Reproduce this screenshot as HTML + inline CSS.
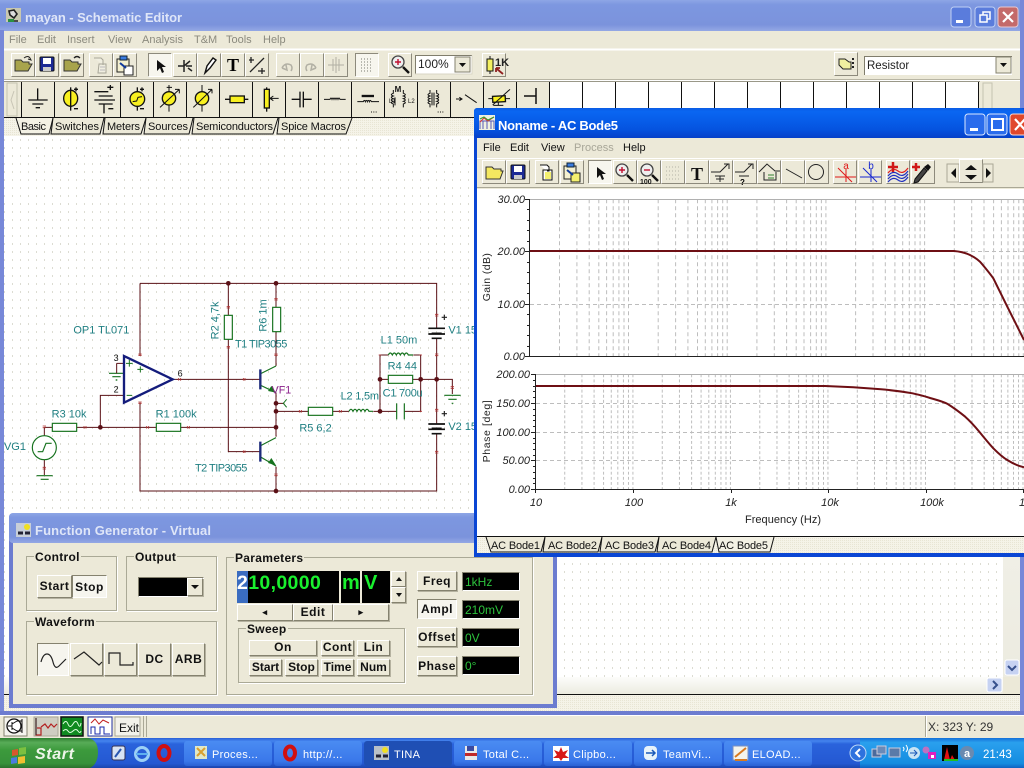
<!DOCTYPE html>
<html><head><meta charset="utf-8"><title>mayan - Schematic Editor</title>
<style>
html,body{margin:0;padding:0;width:1024px;height:768px;overflow:hidden;background:#ece9d8}
svg{position:absolute;left:0;top:0;font-family:"Liberation Sans",sans-serif}
.l{position:absolute;left:0;top:0;width:1024px;height:768px;font-family:"Liberation Sans",sans-serif}
.w{position:absolute;box-sizing:border-box}
.b{position:absolute;box-sizing:border-box;background:#ece9d8;border:1px solid;border-color:#fff #85826f #85826f #fff;box-shadow:1px 1px 0 #b5b2a0;font:bold 12px "Liberation Sans",sans-serif;letter-spacing:.5px;color:#111;text-align:center;line-height:17px}
.p{background:#f6f5ee;border-color:#85826f #fff #fff #85826f;box-shadow:none}
.g{position:absolute;box-sizing:border-box;border:1px solid #aaa996;box-shadow:1px 1px 0 #fff}
.gt{position:absolute;top:-7px;left:7px;background:#ece9d8;font:bold 12px "Liberation Sans",sans-serif;padding:0 1px;color:#111;letter-spacing:.3px;white-space:nowrap}
.d{position:absolute;box-sizing:border-box;background:#000;border:1px solid;border-color:#85826f #fff #fff #85826f;color:#2cc23c;font:12px "Liberation Sans",sans-serif;padding:1px 2px;line-height:16px}
</style></head><body>

<svg width="1024" height="768" viewBox="0 0 1024 768">
<defs>
<linearGradient id="ti" x1="0" y1="0" x2="0" y2="1"><stop offset="0" stop-color="#8ea6e6"/><stop offset=".15" stop-color="#7d97e0"/><stop offset=".8" stop-color="#7b93dc"/><stop offset="1" stop-color="#94a8e4"/></linearGradient>
<linearGradient id="ta" x1="0" y1="0" x2="0" y2="1"><stop offset="0" stop-color="#0a5ce4"/><stop offset=".12" stop-color="#0a66f2"/><stop offset=".7" stop-color="#0554e0"/><stop offset="1" stop-color="#0640c8"/></linearGradient>
<linearGradient id="tb" x1="0" y1="0" x2="0" y2="1"><stop offset="0" stop-color="#2a5fd6"/><stop offset=".1" stop-color="#4484ee"/><stop offset=".2" stop-color="#2a63dc"/><stop offset=".85" stop-color="#2458d2"/><stop offset="1" stop-color="#1c45ad"/></linearGradient>
<linearGradient id="tr" x1="0" y1="0" x2="0" y2="1"><stop offset="0" stop-color="#1470d8"/><stop offset=".15" stop-color="#2aa0ee"/><stop offset=".85" stop-color="#148ce0"/><stop offset="1" stop-color="#0f62c0"/></linearGradient>
<linearGradient id="st" x1="0" y1="0" x2="0" y2="1"><stop offset="0" stop-color="#2e8030"/><stop offset=".15" stop-color="#58ac58"/><stop offset=".4" stop-color="#3c9a3c"/><stop offset=".85" stop-color="#37913a"/><stop offset="1" stop-color="#2a702c"/></linearGradient>
<linearGradient id="btnb" x1="0" y1="0" x2="0" y2="1"><stop offset="0" stop-color="#4a8cf2"/><stop offset=".8" stop-color="#3a78ea"/><stop offset="1" stop-color="#2a62d4"/></linearGradient>
<linearGradient id="sb" x1="0" y1="0" x2="0" y2="1"><stop offset="0" stop-color="#fdfdfb"/><stop offset="1" stop-color="#ecebe0"/></linearGradient>
<pattern id="dots" x="4" y="3" width="8" height="8" patternUnits="userSpaceOnUse"><rect width="8" height="8" fill="#fff"/><path d="M0 .5H1M.5 -1V2" stroke="#dcdcd2" stroke-width="1"/></pattern>
<pattern id="dith" width="2" height="2" patternUnits="userSpaceOnUse"><rect width="2" height="2" fill="#f5f3e8"/><rect width="1" height="1" fill="#e8e5d4"/></pattern>
<g id="b"><rect width="24" height="24" fill="#ece9d8"/><path d="M.5 23.5V.5H23.5" fill="none" stroke="#fff"/><path d="M23.5 .5V23.5H.5" fill="none" stroke="#8d8a7c"/></g>
<g id="p"><rect width="24" height="24" fill="#f7f6ee"/><path d="M.5 23.5V.5H23.5" fill="none" stroke="#8d8a7c"/><path d="M23.5 .5V23.5H.5" fill="none" stroke="#fff"/></g>
<path id="arr" d="M0 0V11L3 8L5 13L7 12L5 7H9Z" fill="#111"/>
</defs>

<!-- main window -->
<rect width="1024" height="768" fill="#ece9d8"/>
<rect width="1024" height="31" fill="url(#ti)"/>
<rect x="0" y="30" width="4" height="690" fill="#7788d8"/>
<rect x="1020" y="0" width="4" height="716" fill="#7788d8"/>
<g transform="translate(6,8)"><rect width="15" height="14" fill="#c8c8b0"/><path d="M3 3l5-1 3 4-3 4-4-3zM2 13h10" stroke="#222" stroke-width="1.6" fill="#ddd"/><rect x="2" y="11" width="6" height="3" fill="#2a9040"/></g>
<text x="25" y="22" font-size="13" font-weight="bold" fill="#dfe6f8" textLength="157">mayan - Schematic Editor</text>
<g transform="translate(951,7)"><rect width="20" height="20" rx="3" fill="#5a7cdc" stroke="#c0d0f4"/><rect x="5" y="13" width="7" height="3" fill="#fff"/></g>
<g transform="translate(975,7)"><rect width="20" height="20" rx="3" fill="#5a7cdc" stroke="#c0d0f4"/><path d="M5 8h7v7H5zM8 8V5h7v7h-3" fill="none" stroke="#fff" stroke-width="1.5"/></g>
<g transform="translate(998,7)"><rect width="20" height="20" rx="3" fill="#c46a6a" stroke="#e8c8d0"/><path d="M5 5l10 10M15 5L5 15" stroke="#fff" stroke-width="2.2"/></g>

<g font-size="11" fill="#8b8a7e">
<text x="9" y="43">File</text><text x="37" y="43">Edit</text><text x="67" y="43">Insert</text><text x="108" y="43">View</text><text x="142" y="43">Analysis</text><text x="194" y="43">T&amp;M</text><text x="226" y="43">Tools</text><text x="263" y="43">Help</text>
</g>
<path d="M4 49.5H1020" stroke="#fff" stroke-width="2"/>
<path d="M4 79.5H1020" stroke="#b8b5a4"/><path d="M4 80.5H1020" stroke="#fff"/>

<!-- main toolbar -->
<use href="#b" x="11" y="53"/><use href="#b" x="35" y="53"/><use href="#b" x="60" y="53"/>
<use href="#b" x="89" y="53"/><use href="#b" x="113" y="53"/>
<use href="#p" x="148" y="53"/><use href="#b" x="173" y="53"/><use href="#b" x="197" y="53"/><use href="#b" x="221" y="53"/><use href="#b" x="245" y="53"/>
<use href="#b" x="276" y="53"/><use href="#b" x="300" y="53"/><use href="#b" x="324" y="53"/>
<use href="#p" x="355" y="53"/><use href="#b" x="388" y="53"/><use href="#b" x="482" y="53"/>
<use href="#b" x="834" y="52"/>
<path d="M15 71V60h6l2 2h6v2h3l-4 7Z" fill="#a8a44c" stroke="#333"/><path d="M24 58q4-3 6 0l1 2-3-1" fill="none" stroke="#222"/>
<path d="M64 71V60h6l2 2h6v2h3l-4 7Z" fill="#a8a44c" stroke="#333"/><path d="M74 58q3-3 6 0" fill="none" stroke="#222" stroke-width="1.3"/>
<rect x="40" y="57" width="14" height="14" rx="1" fill="#1c2a96" stroke="#111"/><rect x="43" y="58" width="8" height="6" fill="#fff"/><rect x="43" y="67" width="8" height="4" fill="#ccc"/>
<path d="M94 58h7l2 2v5M99 64h7v9h-8z" fill="#f0eee0" stroke="#a8a698"/><path d="M100 67h5M100 70h5" stroke="#bbb"/>
<path d="M117 59h12v13h-12z" fill="#f4f0d0" stroke="#222"/><rect x="120" y="56" width="7" height="4" fill="#3a7ce0" stroke="#123"/><path d="M124 66h9v9h-9z" fill="#fff" stroke="#222"/><path d="M120 63l6 5" stroke="#113a9c" stroke-width="2"/>
<use href="#arr" x="157" y="60"/>
<path d="M178 66h6M184 60v12M184 66l6-5M186 66h6M188 68l4 3" stroke="#222" stroke-width="1.5" fill="none"/>
<path d="M205 73l2-7 6-8 3 2-6 8Z" fill="#fff" stroke="#111" stroke-width="1.4"/>
<text x="233" y="71" text-anchor="middle" font-family="Liberation Serif" font-weight="bold" font-size="18">T</text>
<path d="M250 72l14-14M249 60h5M251 57v6M258 71h7M262 68v6" stroke="#222" stroke-width="1.3" fill="none"/>
<path d="M282 68q3-6 9-3 2 3 0 6M282 68l5 2-1-5" fill="none" stroke="#b2b0a4" stroke-width="1.5"/>
<path d="M316 68q-3-6-9-3-2 3 0 6M316 68l-5 2 1-5" fill="none" stroke="#b2b0a4" stroke-width="1.5"/>
<path d="M328 65h16M336 57v16" stroke="#b2b0a4"/><path d="M333 59v12M339 59v12" stroke="#b2b0a4"/>
<path d="M361 59h12M361 62h12M361 65h12M361 68h12M361 71h12" stroke="#7a7a70" stroke-dasharray="1 2"/>
<circle cx="398" cy="62" r="6" fill="#eee" stroke="#444" stroke-width="1.3"/><path d="M395 62h6M398 59v6" stroke="#c01030" stroke-width="1.4"/><path d="M403 67l6 6" stroke="#111" stroke-width="2.4"/>
<rect x="415" y="55" width="57" height="19" fill="#fff"/><path d="M415.5 74V55.5H472" fill="none" stroke="#807d6c"/><path d="M472 55.500V74H415" fill="none" stroke="#d8d5c4"/>
<text x="418" y="68" font-size="12" fill="#222">100%</text>
<rect x="455" y="57" width="15" height="15" fill="#ece9d8" stroke="#85826f"/><path d="M459 63h7l-3.500 4Z" fill="#111"/>
<path d="M490 56v18" stroke="#111"/><rect x="487" y="59" width="6" height="12" fill="#f4f060" stroke="#111"/><text x="495" y="66" font-size="11" font-weight="bold" fill="#222">1K</text><path d="M497 69l6 5M496 68h4M496 68v4" stroke="#902020" stroke-width="1.8" fill="none"/>
<path d="M839 59h6l4 3h2v7h-8l-4-4Z" fill="#f0f0a0" stroke="#222"/><path d="M853 58v12" stroke="#222" stroke-dasharray="2 2" stroke-width="2"/>
<rect x="864" y="56" width="148" height="19" fill="#fff"/><path d="M864.500 75V56.500H1012" fill="none" stroke="#807d6c"/>
<text x="867" y="69" font-size="11.500" fill="#222">Resistor</text>
<rect x="996" y="57" width="15" height="16" fill="#ece9d8" stroke="#85826f"/><path d="M1000 63h7l-3.500 4Z" fill="#111"/>

<!-- palette -->
<path d="M4 81.500H980" stroke="#9a9888"/>
<rect x="7" y="83" width="10" height="33" fill="#ece9d8" stroke="#c5c2b0"/><path d="M14 91l-3 9 3 9" fill="none" stroke="#c8c5b5"/>
<rect x="549" y="82" width="430" height="35" fill="#fff"/>
<g stroke="#111"><path d="M21.500 82V117M54.500 82V117M87.500 82V117M120.500 82V117M153.500 82V117M186.500 82V117M219.500 82V117M252.500 82V117M285.500 82V117M318.500 82V117M351.500 82V117M384.500 82V117M417.500 82V117M450.500 82V117M483.500 82V117M516.500 82V117M549.500 82V117M582.500 82V117M615.500 82V117M648.500 82V117M681.500 82V117M714.500 82V117M747.500 82V117M780.500 82V117M813.500 82V117M846.500 82V117M879.500 82V117M912.500 82V117M945.500 82V117M978.500 82V117"/></g>
<rect x="983" y="83" width="9" height="33" fill="#ece9d8" stroke="#c5c2b0"/>
<g transform="scale(.33333)" fill="none" stroke="#111" stroke-width="4">
 <path d="M113 265V300M85 300H143M97 312H130M107 323H120"/>
 <path d="M212 262V332"/><ellipse cx="212" cy="295" rx="21" ry="24" fill="#f8f020"/><path d="M212 268V322"/><path d="M222 268H234M228 262V274M222 326H234"/>
 <path d="M283 275H325M296 288H338M283 300H345M296 312H338M312 312V340M322 262H340M331 255V270M325 326H340"/>
 <path d="M412 262V332"/><circle cx="412" cy="297" r="22" fill="#f8f020"/><path d="M398 305L410 303L414 292L426 290" stroke-width="3"/><path d="M420 268H432M426 262V274M420 326H432"/>
 <circle cx="507" cy="295" r="20" fill="#f8f020"/><path d="M507 255V275M507 315V335M480 322L538 268M538 268H525M538 268V280M500 262H516" stroke-width="3"/>
 <circle cx="606" cy="295" r="20" fill="#f8f020"/><path d="M606 255V275M606 315V335M580 322L636 268M636 268H624M636 268V280" stroke-width="3"/>
 <path d="M675 298H745"/><rect x="690" y="288" width="43" height="20" fill="#f8f020"/>
 <path d="M800 262V335"/><rect x="793" y="268" width="15" height="56" fill="#f8f020"/><path d="M836 295H812M820 288L810 295L820 302" stroke-width="3"/>
 <path d="M875 298H900M910 298H935M900 275V322M910 275V322"/>
 <path d="M972 298H990q3-8 6 0q3-8 6 0q3-8 6 0q3-8 6 0q3-8 6 0H1037" stroke-width="3"/>
 <path d="M1072 305H1090q3-8 6 0q3-8 6 0q3-8 6 0q3-8 6 0H1137" stroke-width="3"/><path d="M1085 288H1122" stroke-width="7"/><path d="M1113 336h3M1120 336h3M1127 336h3" stroke-width="3"/>
 <path d="M1180 270V280q-12 4 0 8q-12 4 0 8q-12 4 0 8q-12 4 0 8V322M1210 270V280q12 4 0 8q12 4 0 8q12 4 0 8q12 4 0 8V322M1185 292V316" stroke-width="3"/>
 <path d="M1290 270V280q-12 4 0 8q-12 4 0 8q-12 4 0 8q-12 4 0 8V322M1310 270V280q12 4 0 8q12 4 0 8q12 4 0 8q12 4 0 8V322M1296 278V316M1302 278V316M1313 336h3M1320 336h3M1327 336h3" stroke-width="3"/>
 <path d="M1368 297H1385M1378 292L1386 297L1378 302M1395 284L1430 308" stroke-width="3"/>
 <path d="M1465 296H1530M1495 296V316M1480 316H1510" stroke-width="3"/><rect x="1478" y="288" width="38" height="18" fill="#f8f020" transform="rotate(-3 1497 297)"/><path d="M1478 315L1530 268" stroke-width="3"/>
</g>
<text x="398" y="92" font-size="8" font-weight="bold" text-anchor="middle" fill="#111">M</text>
<text x="389" y="103" font-size="6" fill="#111">L1</text><text x="408" y="103" font-size="6" fill="#111">L2</text>
<path d="M524 96h12M536 88v16" stroke="#111" stroke-width="1.500"/>

<!-- tab strip -->
<rect x="4" y="117" width="1016" height="19" fill="url(#dith)"/>
<path d="M4 117.500H1020" stroke="#111"/>
<g fill="#ece9d8" stroke="#111">
<path d="M16 118L21 134H49L53 118" fill="#f3f1e4"/>
<path d="M53 118L51 134H100L104 118"/>
<path d="M105 118L103 134H141L146 118"/>
<path d="M146 118L144 134H189L193 118"/>
<path d="M194 118L192 134H273L278 118"/>
<path d="M279 118L277 134H346L352 118"/>
</g>
<g font-size="11" fill="#111">
<text x="21" y="130" textLength="25">Basic</text><text x="55" y="130" textLength="44">Switches</text><text x="107" y="130" textLength="33">Meters</text><text x="148" y="130" textLength="40">Sources</text><text x="196" y="130" textLength="77">Semiconductors</text><text x="281" y="130" textLength="65">Spice Macros</text>
</g>

<!-- canvas -->
<rect x="4" y="136" width="999" height="541" fill="url(#dots)"/>
<rect x="1003" y="136" width="17" height="541" fill="url(#sb)"/>
<rect x="4" y="677" width="999" height="17" fill="url(#sb)"/>
<rect x="1003" y="677" width="17" height="17" fill="#ece9d8"/>
<path d="M4 694.500H1020" stroke="#111"/>
<rect x="4" y="695" width="1016" height="16" fill="url(#dith)"/>
<rect x="0" y="711" width="1024" height="4" fill="#6c7cd0"/>
<g transform="translate(1005,660)"><rect width="14" height="15" rx="2" fill="#c6d2f2" stroke="#fff"/><path d="M3 6l4 4 4-4" fill="none" stroke="#36508c" stroke-width="2"/></g>
<g transform="translate(987,678)"><rect width="15" height="14" rx="2" fill="#c6d2f2" stroke="#fff"/><path d="M6 3l4 4-4 4" fill="none" stroke="#36508c" stroke-width="2"/></g>

<!-- schematic -->
<g transform="translate(0,270) scale(.33333)">
 <g fill="none" stroke="#5a1016" stroke-width="3">
  <path d="M420 40H1310V175M420 40V258M420 398V663H1310V490M1310 205V460"/>
  <path d="M685 40V136M685 208V545H780M828 40V112M828 185V288M828 368V500M828 590V663"/>
  <path d="M520 328H780M301 472V376H372M133 472H157M230 472H469M542 472H828"/>
  <path d="M828 424H925M998 424H1047M1120 424H1190M1213 424H1262V255H1240M1140 424V255H1165M1140 328H1165M1238 328H1357V372"/>
  <path d="M133 472V497M133 569V615M828 400H852"/>
 </g>
 <g fill="#5a1016"><circle cx="685" cy="40" r="7"/><circle cx="828" cy="40" r="7"/><circle cx="828" cy="663" r="7"/><circle cx="828" cy="472" r="7"/><circle cx="828" cy="424" r="7"/><circle cx="828" cy="400" r="7"/><circle cx="301" cy="472" r="7"/><circle cx="1140" cy="424" r="7"/><circle cx="1140" cy="328" r="7"/><circle cx="1262" cy="328" r="7"/><circle cx="1310" cy="328" r="7"/></g>
 <g fill="#fff" stroke="#16721e" stroke-width="3.500">
  <rect x="673" y="136" width="24" height="72"/><rect x="818" y="112" width="24" height="73"/>
  <rect x="1165" y="316" width="73" height="24"/><rect x="925" y="412" width="73" height="24"/>
  <rect x="157" y="460" width="73" height="24"/><rect x="469" y="460" width="73" height="24"/>
 </g>
 <g fill="none" stroke="#16721e" stroke-width="3.500">
  <circle cx="133" cy="533" r="36" fill="#fff"/><path d="M113 545H128L138 520H155"/>
  <path d="M110 617H158M122 628H146"/>
  <path d="M1165 255q6-12 12 0q6-12 12 0q6-12 12 0q6-12 12 0q6-12 12 0h14M1047 424q6-12 12 0q6-12 12 0q6-12 12 0q6-12 12 0q6-12 12 0h12"/>
  <path d="M1190 400V448M1213 400V448"/>
  <path d="M780 312L828 288M780 345L828 368M780 528L828 503M780 560L828 588"/>
  <path d="M327 310H370M337 320H362M347 330H352"/><path d="M350 280V310M350 280H372" stroke="#5a1016" stroke-width="3"/>
  <path d="M1333 376H1382M1345 388H1370M1355 400H1360"/>
  <path d="M860 388L850 400L860 412" stroke-width="3"/>
 </g>
 <path d="M828 368L804 363L814 348Z" fill="#16721e"/><path d="M828 586L804 579L814 564Z" fill="#16721e"/>
 <path d="M781 298V358M781 515V575" stroke="#1c2a7a" stroke-width="7"/>
 <path d="M1285 175H1335M1295 190H1325M1285 192H1335M1295 205H1325" stroke="#111" stroke-width="5" fill="none"/>
 <path d="M1285 462H1335M1295 475H1325M1285 478H1335M1295 491H1325" stroke="#111" stroke-width="5" fill="none"/>
 <path d="M1325 142H1341M1333 134V150M1325 431H1341M1333 423V439" stroke="#222" stroke-width="3.500"/>
 <path d="M372 258L518 328L372 398Z" fill="none" stroke="#141c7c" stroke-width="7"/>
 <path d="M378 280H398M388 270V290M412 298H430M421 289V307M380 376H396" stroke="#16721e" stroke-width="3"/>
 <path d="M680 110h10M680 114h10M680 230h10M680 234h10M823 86h10M823 90h10M823 252h10M823 256h10M730 324v8M735 324v8M730 541v8M735 541v8M536 324v8M542 324v8M898 420v8M904 420v8M1018 420v8M1024 420v8M252 468v8M258 468v8M446 468v8M440 468v8M562 468v8M568 468v8M1305 133h10M1305 138h10M1305 252h10M1305 257h10M1305 418h10M1305 423h10M1305 544h10M1305 549h10M823 612h10M823 617h10M128 592h10M128 597h10M128 468h10M128 473h10M415 252h10M415 256h10M415 400h10M415 396h10M1352 350h10M1352 355h10M1136 255h8M1258 255h8M1258 424h8" stroke="#b03030" stroke-width="2.500"/>
 <g fill="#1f7f82" font-size="33">
  <text x="220" y="190">OP1 TL071</text>
  <text x="705" y="232" textLength="157">T1 TIP3055</text>
  <text x="1142" y="220">L1 50m</text><text x="1163" y="298">R4 44</text><text x="1148" y="380" textLength="120">C1 700u</text><text x="1022" y="388" textLength="115">L2 1,5m</text><text x="898" y="484">R5 6,2</text>
  <text x="155" y="442">R3 10k</text><text x="467" y="442">R1 100k</text><text x="12" y="540">VG1</text><text x="585" y="605" textLength="157">T2 TIP3055</text>
  <text x="1345" y="190">V1 15</text><text x="1345" y="480">V2 15</text>
  <text transform="translate(655,208) rotate(-90)">R2 4,7k</text><text transform="translate(800,185) rotate(-90)">R6 1m</text>
 </g>
 <text x="815" y="370" font-size="32" fill="#8a1f8a">VF1</text>
 <g fill="#111" font-size="27"><text x="341" y="273">3</text><text x="341" y="368">2</text><text x="533" y="320">6</text></g>
</g>

<!-- status row -->
<rect x="0" y="715" width="1024" height="23" fill="#ece9d8"/>
<path d="M0 715.500H1024" stroke="#fff"/>
<path d="M143.500 716V737M146.500 716V737" stroke="#aaa896"/>
<path d="M925.500 716V737" stroke="#aaa896"/><path d="M926.500 716V737" stroke="#fff"/>
<text x="928" y="731" font-size="12" fill="#333">X: 323  Y: 29</text>
<g transform="translate(0,712)">
 <rect x="4" y="5" width="23" height="19" fill="#f5f4ee" stroke="#85826f"/>
 <circle cx="14" cy="14" r="7" fill="#fff" stroke="#111" stroke-width="1.300"/><path d="M8 14h4M12 10v8M12 12l5-3M12 16l5 3M22 7v14M17 9h5M17 19h5" stroke="#111" fill="none"/>
 <rect x="34" y="5" width="24" height="19" fill="#cfcdc2" stroke="#a8a696"/><path d="M36 6v17h5v-7h-4M41 15l4-3 3 4 3-4 3 3 3-3" fill="none" stroke="#b42020" stroke-width="1.200"/><path d="M36 6v17" stroke="#222"/>
 <rect x="61" y="5" width="22" height="19" fill="#108a20" stroke="#111" stroke-width="1.500"/><path d="M63 12q3-5 5 0t5 0 5 0 3-1M63 19q3-3 5 0t5 0 5 0 3 0" stroke="#dfffdf" fill="none"/>
 <rect x="88" y="5" width="24" height="19" fill="#fff" stroke="#2030a0"/><path d="M91 11l4-4 4 5 4-4 6 3" stroke="#c02020" fill="none"/><path d="M91 22v-7h4v7h5v-7h4v7h6" stroke="#1828a8" fill="none"/>
 <rect x="115" y="5" width="25" height="19" fill="#f3f2ea" stroke="#a8a696"/>
 <text x="119" y="20" font-size="12" fill="#111">Exit</text>
</g>

<!-- taskbar -->
<rect y="738" width="1024" height="30" fill="url(#tb)"/>
<path d="M0 738H88Q98 740 98 752Q98 764 90 768H0Z" fill="url(#st)"/>
<g><path d="M12 750l6-1v6l-6 1z" fill="#d8582c"/><path d="M19 748l7-1v7l-7 1z" fill="#7cc040"/><path d="M11 758l6-1v6l-6 1z" fill="#4a7ce0"/><path d="M18 757l7-1v7l-7 1z" fill="#f0c030"/></g>
<text x="35" y="759" font-size="16" font-weight="bold" font-style="italic" fill="#eef6ea" textLength="39">Start</text>
<g><rect x="112" y="746" width="13" height="14" rx="2" fill="#d8e4f4" stroke="#335"/><path d="M115 757l6-8" stroke="#2a58b0" stroke-width="2"/><circle cx="142" cy="754" r="6.500" fill="none" stroke="#9bd0f6" stroke-width="3"/><path d="M136 754h12" stroke="#5eb0f0" stroke-width="2"/><ellipse cx="164" cy="753" rx="5.500" ry="7" fill="none" stroke="#d01010" stroke-width="4"/></g>
<g fill="url(#btnb)">
<rect x="184" y="741" width="88" height="25" rx="3"/><rect x="274" y="741" width="88" height="25" rx="3"/><rect x="454" y="741" width="88" height="25" rx="3"/><rect x="544" y="741" width="88" height="25" rx="3"/><rect x="634" y="741" width="88" height="25" rx="3"/><rect x="724" y="741" width="88" height="25" rx="3"/>
</g>
<rect x="364" y="741" width="88" height="25" rx="3" fill="#1f4fb4"/>
<g font-size="11" fill="#fff" letter-spacing=".3">
<text x="212" y="758">Proces...</text><text x="303" y="758">http://...</text><text x="394" y="758">TINA</text><text x="483" y="758">Total C...</text><text x="573" y="758">Clipbo...</text><text x="663" y="758">TeamVi...</text><text x="752" y="758">ELOAD...</text>
</g>
<g><rect x="195" y="746" width="12" height="13" fill="#dfe8c8"/><path d="M197 748l8 8M205 748l-8 8" stroke="#d8a030" stroke-width="2"/></g>
<ellipse cx="290" cy="753" rx="5" ry="6.500" fill="none" stroke="#d01010" stroke-width="4"/>
<g><rect x="374" y="746" width="15" height="14" fill="#b8c0c8"/><circle cx="385" cy="750" r="3" fill="#f0e020"/><path d="M376 756h5M383 756h5" stroke="#223" stroke-width="3"/></g>
<g><rect x="465" y="746" width="12" height="14" fill="#e8e8e8"/><rect x="465" y="753" width="12" height="3" fill="#c02828"/><rect x="467" y="746" width="7" height="5" fill="#3a4aa0"/></g>
<g><rect x="553" y="746" width="16" height="15" fill="#fff"/><path d="M561 747l2 5 5-2-3 5 4 3-6 0-2 3-2-3-6 0 4-3-3-5 5 2Z" fill="#d81818"/></g>
<g><rect x="644" y="746" width="13" height="14" rx="4" fill="#e6f2fa"/><path d="M646 753h9M652 750l3 3-3 3" stroke="#1858b8" stroke-width="1.500" fill="none"/></g>
<g><rect x="733" y="746" width="15" height="14" fill="#f4f4ec" stroke="#7a90c0"/><path d="M735 757l11-9M735 760h12" stroke="#d87a20" stroke-width="2"/></g>
<path d="M860 738H1024V768H860Z" fill="url(#tr)"/>
<circle cx="858" cy="753" r="8" fill="#2e72de" stroke="#bcd8f8"/><path d="M860 749l-4 4 4 4" fill="none" stroke="#fff" stroke-width="2"/>
<g><rect x="872" y="749" width="9" height="8" fill="#4a6a9c" stroke="#ccd"/><rect x="877" y="746" width="9" height="8" fill="#6a8ab8" stroke="#ccd"/><rect x="889" y="748" width="11" height="9" fill="#5a7aa8" stroke="#ccd"/><path d="M903 747q2 2 0 4M906 745q3 4 0 7" stroke="#fff" fill="none"/><circle cx="914" cy="753" r="6" fill="#c8e4f4"/><path d="M910 753h7M914 750l3 3-3 3" stroke="#1858b8" fill="none"/><circle cx="926" cy="750" r="3.500" fill="#c070c0"/><rect x="928" y="752" width="8" height="7" fill="#e020c0"/><rect x="931" y="755" width="3" height="3" fill="#fff"/><rect x="942" y="745" width="16" height="16" fill="#000"/><path d="M944 760l3-13 3 13 2-5 3 5" fill="#e01010"/><path d="M944 760h14" stroke="#20c020" stroke-width="2"/><circle cx="967" cy="753" r="7" fill="#6a8ab0"/><text x="964" y="757" font-size="11" font-weight="bold" fill="#fff">a</text></g>
<text x="983" y="758" font-size="11.500" fill="#fff">21:43</text>
</svg>

<!-- function generator window -->
<div class="l">
<svg width="1024" height="768" viewBox="0 0 1024 768" style="pointer-events:none">
<path d="M9 708V518Q9 513 14 513H552Q557 513 557 518V708Z" fill="#6c7cd0"/>
<rect x="9" y="513" width="548" height="30" rx="4" fill="url(#ti)"/>
<rect x="13" y="543" width="540" height="161" fill="#ece9d8"/>
<rect x="16" y="523" width="15" height="14" fill="#c8cfd8"/><circle cx="27" cy="527" r="3" fill="#f0e020"/><path d="M18 533h5M25 533h5" stroke="#223" stroke-width="3"/>
<text x="35" y="535" font-size="13" font-weight="bold" fill="#dfe6f8" textLength="176">Function Generator - Virtual</text>
</svg>
<div class="g" style="left:26px;top:556px;width:91px;height:55px"><span class="gt">Control</span></div>
<div class="g" style="left:126px;top:556px;width:91px;height:55px"><span class="gt">Output</span></div>
<div class="g" style="left:26px;top:621px;width:191px;height:74px"><span class="gt">Waveform</span></div>
<div class="g" style="left:226px;top:557px;width:307px;height:138px"><span class="gt">Parameters</span></div>
<div class="g" style="left:238px;top:628px;width:167px;height:55px"><span class="gt">Sweep</span></div>
<div class="b" style="left:37px;top:575px;width:35px;height:23px;line-height:21px">Start</div>
<div class="b p" style="left:72px;top:575px;width:35px;height:23px;line-height:23px">Stop</div>
<div class="d" style="left:138px;top:577px;width:66px;height:20px"></div>
<div class="b" style="left:187px;top:578px;width:16px;height:18px"></div>
<div class="b" style="left:138px;top:643px;width:33px;height:33px;line-height:30px">DC</div>
<div class="b" style="left:172px;top:643px;width:33px;height:33px;line-height:30px">ARB</div>
<div class="b p" style="left:37px;top:643px;width:32px;height:33px"></div>
<div class="b" style="left:70px;top:643px;width:33px;height:33px"></div>
<div class="b" style="left:104px;top:643px;width:33px;height:33px"></div>
<div class="d" style="left:237px;top:571px;width:102px;height:32px;border:0"></div>
<div class="d" style="left:341px;top:571px;width:19px;height:32px;border:0"></div>
<div class="d" style="left:362px;top:571px;width:28px;height:32px;border:0"></div>
<div class="w" style="left:237px;top:571px;width:11px;height:32px;background:#3a6cc0"></div>
<div class="w" style="left:237px;top:572px;width:102px;height:30px;font:bold 19.5px/23px 'Liberation Sans',sans-serif;color:#19f02e;letter-spacing:.35px;padding-top:0"><span style="color:#fff">2</span>10,0000</div>
<div class="w" style="left:342px;top:572px;font:bold 20px/23px 'Liberation Sans',sans-serif;color:#19f02e">m</div>
<div class="w" style="left:364px;top:572px;font:bold 20px/23px 'Liberation Sans',sans-serif;color:#19f02e">V</div>
<div class="b" style="left:391px;top:571px;width:15px;height:16px"></div>
<div class="b" style="left:391px;top:587px;width:15px;height:16px"></div>
<div class="b" style="left:237px;top:604px;width:56px;height:17px;line-height:14px;font-size:9px">◂</div>
<div class="b" style="left:293px;top:604px;width:40px;height:17px;line-height:15px">Edit</div>
<div class="b" style="left:333px;top:604px;width:56px;height:17px;line-height:14px;font-size:9px">▸</div>
<div class="b" style="left:249px;top:640px;width:68px;height:16px;line-height:13px">On</div>
<div class="b" style="left:321px;top:640px;width:33px;height:16px;line-height:13px">Cont</div>
<div class="b" style="left:357px;top:640px;width:33px;height:16px;line-height:13px">Lin</div>
<div class="b" style="left:249px;top:659px;width:33px;height:17px;line-height:15px;letter-spacing:0">Start</div>
<div class="b" style="left:285px;top:659px;width:33px;height:17px;line-height:15px;letter-spacing:0">Stop</div>
<div class="b" style="left:321px;top:659px;width:33px;height:17px;line-height:15px;letter-spacing:0">Time</div>
<div class="b" style="left:357px;top:659px;width:33px;height:17px;line-height:15px;letter-spacing:0">Num</div>
<div class="b" style="left:417px;top:571px;width:40px;height:20px;line-height:18px">Freq</div>
<div class="b p" style="left:417px;top:599px;width:40px;height:20px;line-height:18px">Ampl</div>
<div class="b" style="left:417px;top:627px;width:40px;height:20px;line-height:18px">Offset</div>
<div class="b" style="left:417px;top:656px;width:40px;height:20px;line-height:18px">Phase</div>
<div class="d" style="left:462px;top:572px;width:58px;height:19px">1kHz</div>
<div class="d" style="left:462px;top:600px;width:58px;height:19px">210mV</div>
<div class="d" style="left:462px;top:628px;width:58px;height:19px">0V</div>
<div class="d" style="left:462px;top:656px;width:58px;height:19px">0°</div>
<svg width="1024" height="768" viewBox="0 0 1024 768" style="pointer-events:none">
<path d="M191 585h8l-4 4Z M396 581h6l-3-4Z M396 593h6l-3 4Z" fill="#111"/>
<path d="M41 662q2-8 6-8t6 8 6 4 7-7" fill="none" stroke="#222" stroke-width="1.200"/>
<path d="M74 659l10-7 15 13 3-3" fill="none" stroke="#222" stroke-width="1.200"/>
<path d="M109 664v-11h11v12h13v-3" fill="none" stroke="#222" stroke-width="1.200"/>
</svg>
</div>

<!-- Bode window -->
<svg width="1024" height="768" viewBox="0 0 1024 768">
<defs>
<path id="dec" d="M29.700 0V157M47.100 0V157M59.400 0V157M69 0V157M76.800 0V157M83.400 0V157M89.100 0V157M94.200 0V157M98.700 0V157" fill="none" stroke="#bdbdbd" stroke-dasharray="4 3"/>
</defs>
<path d="M474 557V112Q474 108 478 108H1024V557Z" fill="#0a46d4"/>
<rect x="474" y="108" width="550" height="30" rx="3" fill="url(#ta)"/>
<rect x="477" y="138" width="547" height="415" fill="#ece9d8"/>
<g transform="translate(479,115)"><rect width="16" height="15" fill="#f0f0e0"/><path d="M1 14V6h14v8M4 6v8M8 6v8M12 6v8" stroke="#5858b8" fill="none"/><path d="M1 7l4-4 4 3 6-4" stroke="#e03030" fill="none"/><path d="M1 4l4-2 4 3 6-3" stroke="#30a030" fill="none"/></g>
<text x="498" y="130" font-size="13" font-weight="bold" fill="#fff" textLength="120">Noname - AC Bode5</text>
<g transform="translate(965,114)"><rect width="20" height="21" rx="3" fill="#2a6cec" stroke="#dbe8ff"/><rect x="5" y="14" width="8" height="3" fill="#fff"/></g>
<g transform="translate(987,114)"><rect width="20" height="21" rx="3" fill="#2a6cec" stroke="#dbe8ff"/><rect x="5" y="5" width="11" height="11" fill="none" stroke="#fff" stroke-width="2"/></g>
<g transform="translate(1010,114)"><rect width="20" height="21" rx="3" fill="#e0482c" stroke="#f8d8d0"/><path d="M5 5l10 11M15 5L5 16" stroke="#fff" stroke-width="2.200"/></g>
<g font-size="11" fill="#111">
<text x="483" y="151">File</text><text x="510" y="151">Edit</text><text x="541" y="151">View</text><text x="574" y="151" fill="#a8a698">Process</text><text x="623" y="151">Help</text>
</g>
<path d="M477 158.500H1024" stroke="#fff"/>
<rect x="477" y="187" width="547" height="1" fill="#aaa896"/>
<use href="#b" x="482" y="160"/><use href="#b" x="506" y="160"/><use href="#b" x="535" y="160"/><use href="#b" x="560" y="160"/>
<use href="#p" x="588" y="160"/><use href="#b" x="613" y="160"/><use href="#b" x="637" y="160"/><use href="#b" x="661" y="160"/><use href="#b" x="685" y="160"/><use href="#b" x="709" y="160"/><use href="#b" x="733" y="160"/><use href="#b" x="757" y="160"/><use href="#b" x="781" y="160"/><use href="#b" x="805" y="160"/><use href="#b" x="833" y="160"/><use href="#b" x="858" y="160"/><use href="#b" x="886" y="160"/><use href="#b" x="911" y="160"/>
<rect x="947" y="164" width="12" height="18" fill="#ece9d8" stroke="#aaa896"/><use href="#b" x="959" y="159"/><rect x="983" y="164" width="10" height="18" fill="#ece9d8" stroke="#aaa896"/>
<path d="M956 168v10l-5-5ZM986 168v10l5-5ZM965 170l6-5 6 5ZM965 175l6 5 6-5Z" fill="#111"/>
<path d="M486 179V167h6l2 2h7v2h2l-3 8Z" fill="#f4e860" stroke="#333"/>
<rect x="511" y="165" width="14" height="14" rx="1" fill="#1c2a96" stroke="#111"/><rect x="514" y="166" width="8" height="6" fill="#fff"/><rect x="514" y="175" width="8" height="4" fill="#ccc"/>
<path d="M540 165h7l2 2v4h-2M544 170h8v10h-9V170z" fill="#fff" stroke="#111"/><rect x="545" y="172" width="6" height="7" fill="#f4f070"/>
<path d="M564 166h12v13h-12z" fill="#f4f0d0" stroke="#222"/><rect x="567" y="163" width="7" height="4" fill="#3a7ce0" stroke="#123"/><path d="M571 173h9v9h-9z" fill="#f4f070" stroke="#222"/><path d="M567 170l6 5" stroke="#113a9c" stroke-width="2"/>
<use href="#arr" x="597" y="167"/>
<circle cx="622" cy="170" r="6" fill="#eee" stroke="#444" stroke-width="1.300"/><path d="M619 170h6M622 167v6" stroke="#c01030" stroke-width="1.400"/><path d="M627 175l6 6" stroke="#111" stroke-width="2.400"/>
<circle cx="647" cy="170" r="6" fill="#eee" stroke="#444" stroke-width="1.300"/><path d="M644 170h6" stroke="#c01030" stroke-width="1.400"/><path d="M652 175l6 6" stroke="#111" stroke-width="2.400"/>
<text x="640" y="184" font-size="7" font-weight="bold" fill="#111">100</text>
<path d="M666 167h13M666 171h13M666 175h13M666 179h13" stroke="#b5b3a6" stroke-dasharray="1 2"/>
<text x="697" y="180" text-anchor="middle" font-family="Liberation Serif" font-weight="bold" font-size="18" fill="#111">T</text>
<g fill="none" stroke="#222"><path d="M711 172h9l4-4 4-4M724 164h5v5M715 176h10M716 179h8M720 176v6"/><path d="M735 172h9l4-4 4-4M748 164h5v5M739 176h10"/><path d="M759 172l8-8 8 7h5M764 172v8h12v-8"/><path d="M786 169l16 9"/></g>
<text x="740" y="185" font-size="8" font-weight="bold">?</text>
<path d="M768 175h6M768 178h6" stroke="#308030"/>
<circle cx="816" cy="172" r="7.500" fill="none" stroke="#222"/>
<path d="M835 177h21M846 169v13M838 168l14 14" stroke="#e01818" fill="none"/><text x="846" y="169" font-size="10" text-anchor="middle" fill="#e01818">a</text>
<path d="M860 177h21M871 169v13M863 168l14 14" stroke="#1828d0" fill="none"/><text x="871" y="169" font-size="10" text-anchor="middle" fill="#1828d0">b</text>
<path d="M888 176q5-6 10-2t10-3M888 179q5-6 10-2t10-3M888 182q5-6 10-2t10-3" fill="none" stroke-width="1.200" stroke="#2030c0"/><path d="M888 173q5-6 10-2t10-3" fill="none" stroke="#e02020" stroke-width="1.200"/><path d="M891 160v10M886 165h10" stroke="#d01818" stroke-width="2.500" transform="translate(2,2)"/>
<path d="M914 183l4-1 9-11-3-3-9 11Z" fill="#444" stroke="#111"/><path d="M924 167l4-3 3 3-3 4Z" fill="#111"/><path d="M916 163v8M912 167h8" stroke="#d01818" stroke-width="2.500"/>

<!-- chart area -->
<rect x="477" y="189" width="547" height="347" fill="#fff"/>
<g transform="translate(529.800,199.300)">
 <use href="#dec"/><use href="#dec" x="98.700"/><use href="#dec" x="197.400"/><use href="#dec" x="296.100"/><use href="#dec" x="394.800"/>
</g>
<path d="M530 251.500H1024M530 304.500H1024" stroke="#bdbdbd" stroke-dasharray="4 3"/>
<path d="M530 199.500H1024" stroke="#b0b0b0"/>
<path d="M529.500 199V356M526 356.500H1024" stroke="#222"/>
<path d="M525 199.500h5M525 251.500h5M525 304.500h5M525 356.500h5M527 209.500h3M527 220.500h3M527 230.500h3M527 241.500h3M527 262.500h3M527 272.500h3M527 283.500h3M527 293.500h3M527 314.500h3M527 325.500h3M527 335.500h3M527 346.500h3" stroke="#222"/>
<path d="M530 251H954C960 251.500 965 252.500 970 255C975 257.500 979 260 982 264C987 270 991 275 993.300 278.300L1007.300 306.700L1024 340" fill="none" stroke="#6e0f14" stroke-width="2"/>
<g transform="translate(535.400,374.300) scale(.988,.7325)">
 <use href="#dec"/><use href="#dec" x="98.700"/><use href="#dec" x="197.400"/><use href="#dec" x="296.100"/><use href="#dec" x="394.800"/>
</g>
<path d="M536 403.500H1024M536 432.500H1024M536 460.500H1024" stroke="#bdbdbd" stroke-dasharray="4 3"/>
<path d="M536 374.500H1024" stroke="#b0b0b0"/>
<path d="M535.500 374V489M531 489.500H1024" stroke="#222"/>
<path d="M531 374.500h5M531 403.500h5M531 432.500h5M531 460.500h5M533 380.500h3M533 386.500h3M533 391.500h3M533 397.500h3M533 409.500h3M533 415.500h3M533 420.500h3M533 426.500h3M533 438.500h3M533 443.500h3M533 449.500h3M533 455.500h3M533 466.500h3M533 472.500h3M533 478.500h3M533 483.500h3" stroke="#222"/>
<path d="M535.500 490v3M633.500 490v3M731.500 490v3M828.500 490v3M926.500 490v3M1023.500 490v3" stroke="#222"/>
<path d="M536 386H825C840 386.500 860 387.500 881 389.300C895 390.500 905 392 912.600 393.300C920 395 926 396.500 930.100 398C937 400 943 401.500 947.700 404C954 408 960 412.500 965.200 416.700C970 421 975 426.500 979.300 431.700C984 437.500 989 443.500 993.300 448.300C998 453 1003 457.500 1007.300 460C1012 463 1018 466 1024 467.300" fill="none" stroke="#6e0f14" stroke-width="2"/>
<g font-size="11" font-style="italic" fill="#222" text-anchor="end">
<text x="525" y="203">30.00</text><text x="525" y="255">20.00</text><text x="525" y="308">10.00</text><text x="525" y="360">0.00</text>
<text x="530" y="378">200.00</text><text x="530" y="407">150.00</text><text x="530" y="436">100.00</text><text x="530" y="464">50.00</text><text x="530" y="493">0.00</text>
</g>
<g font-size="11" font-style="italic" fill="#222" text-anchor="middle">
<text x="536" y="506">10</text><text x="634" y="506">100</text><text x="731" y="506">1k</text><text x="830" y="506">10k</text><text x="932" y="506">100k</text><text x="1022" y="506">1</text>
</g>
<text x="783" y="523" font-size="11" fill="#222" text-anchor="middle" textLength="76">Frequency (Hz)</text>
<text transform="translate(490,277) rotate(-90)" font-size="10.500" fill="#222" text-anchor="middle" letter-spacing=".4">Gain (dB)</text>
<text transform="translate(490,431) rotate(-90)" font-size="10.500" fill="#222" text-anchor="middle" letter-spacing=".6">Phase [deg]</text>
<rect x="477" y="536" width="547" height="17" fill="url(#dith)"/>
<path d="M477 536.500H1024" stroke="#111"/>
<g fill="#ece9d8" stroke="#111">
<path d="M486 537L491 552H541L545 537"/><path d="M545 537L543 552H598L602 537"/><path d="M602 537L600 552H655L659 537"/><path d="M659 537L657 552H712L716 537"/>
<path d="M716 537L719 552H770L774 537" fill="#f3f1e4"/>
</g>
<g font-size="11" fill="#111">
<text x="491" y="549" textLength="49">AC Bode1</text><text x="548" y="549" textLength="49">AC Bode2</text><text x="605" y="549" textLength="49">AC Bode3</text><text x="662" y="549" textLength="49">AC Bode4</text><text x="719" y="549" textLength="49">AC Bode5</text>
</g>
</svg>
</body></html>
